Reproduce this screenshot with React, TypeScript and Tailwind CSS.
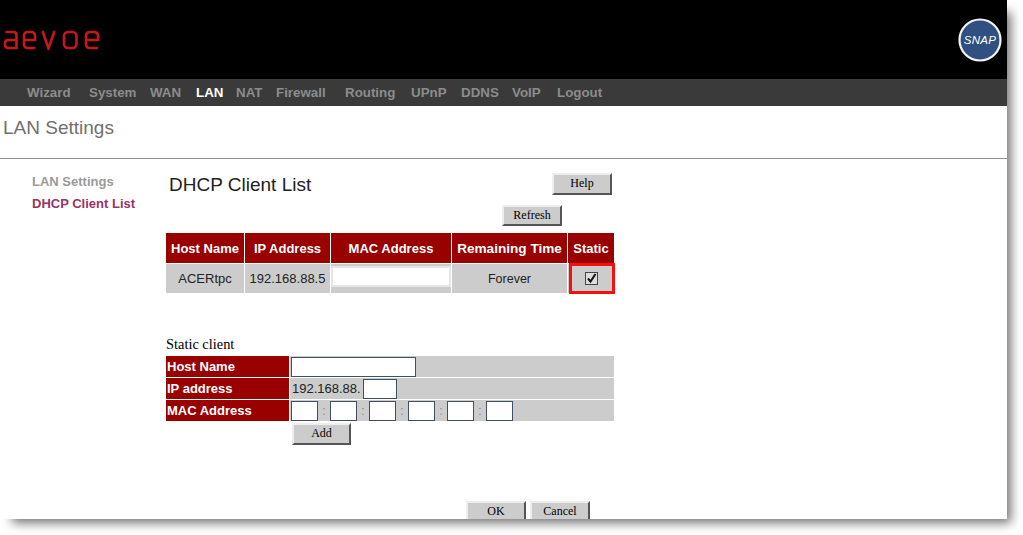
const NAV = [
  ["Wizard", "w-[62px]"],
  ["System", "w-[61px]"],
  ["WAN", "w-[46px]"],
  ["LAN", "w-[40px]"],
  ["NAT", "w-[40px]"],
  ["Firewall", "w-[69px]"],
  ["Routing", "w-[66px]"],
  ["UPnP", "w-[50px]"],
  ["DDNS", "w-[51px]"],
  ["VoIP", "w-[45px]"],
  ["Logout", "w-[60px]"],
] as const;

const sans = "font-['Liberation_Sans',Arial,sans-serif]";
const serif = "font-['Liberation_Serif','Times_New_Roman',serif]";

function Logo() {
  return (
    <svg width="100" height="20" viewBox="0 0 100 20" fill="none" stroke="#c8161d" strokeWidth="2.6">
      <path d="M5.500 2H13.500Q16.500 2 16.500 5V18H8.500Q5 18 5 14.500V13.500Q5 10 8.500 10H16.500" />
      <path d="M24 10H35V6Q35 2 31 2H28Q24 2 24 6V14Q24 18 28 18H35" />
      <path d="M42.500 1L48.500 18.500L54.500 1" />
      <rect x="64" y="2" width="12.500" height="16" rx="4" />
      <path d="M86 10H98V6Q98 2 94 2H90Q86 2 86 6V14Q86 18 90 18H98" />
    </svg>
  );
}

function SnapLogo() {
  return (
    <svg width="44" height="44" viewBox="0 0 44 44">
      <circle cx="22" cy="22" r="20.500" fill="#2f5080" stroke="#f4f4f4" strokeWidth="2.200" />
      <text x="22" y="26" textAnchor="middle" fill="#fff" fontSize="11.500" fontStyle="italic" fontWeight="400" letterSpacing="0.3" fontFamily="Liberation Sans, sans-serif">SNAP</text>
    </svg>
  );
}

function Btn({ children, className = "" }: { children: React.ReactNode; className?: string }) {
  return (
    <button className={`${serif} block bg-[#cccccc] text-[12px] leading-none pb-[2px] text-black border-2 border-t-[#eeeeee] border-l-[#eeeeee] border-r-[#555555] border-b-[#555555] ${className}`}>
      {children}
    </button>
  );
}

function Box({ w }: { w: string }) {
  return <span className={`block h-[20px] bg-white border border-[#3f5060] ${w}`} />;
}

function Sep() {
  return <span className="w-[12px] text-center text-[12px] text-[#888]">:</span>;
}

export default function App() {
  return (
    <div className="h-[535px] w-[1023px] bg-white overflow-hidden">
      <div className={`${sans} h-[519px] w-[1007px] bg-white shadow-[8px_8px_10px_-4px_rgba(0,0,0,0.55)]`}>
        <div className="h-[519px] overflow-hidden">
          <header className="h-[79px] bg-black flex items-center justify-between">
            <div className="pt-[1px]"><Logo /></div>
            <div className="mr-[5px] mt-[1px]"><SnapLogo /></div>
          </header>
          <nav className="flex h-[27px] pl-[27px] bg-[#3a3a3a] text-[13.33px] font-bold leading-[27px]">
            {NAV.map(([label, w]) => (
              <span key={label} className={`${w} ${label === "LAN" ? "text-white" : "text-[#8c8c8c]"}`}>
                {label}
              </span>
            ))}
          </nav>
          <div className="h-[53px] border-b border-[#909090] pl-[3px] pt-[10px] text-[19px] leading-[24px] text-[#707070]">LAN Settings</div>
          <div className="flex">
            <aside className="w-[166px] pl-[32px] pt-[12px] text-[13px] font-bold leading-[22px]">
              <div className="text-[#9a9a9a]">LAN Settings</div>
              <div className="text-[#993366]">DHCP Client List</div>
            </aside>
            <main className="w-[448px]">
              <div className="flex items-start justify-between h-[74px] pl-[3px]">
                <h1 className="mt-[14px] text-[19px] leading-[24px] text-[#222]">DHCP Client List</h1>
                <div className="flex flex-col items-end pt-[14px]">
                  <Btn className="w-[60px] h-[22px] mr-[2px]">Help</Btn>
                  <Btn className="w-[60px] h-[21px] mt-[10px] mr-[52px]">Refresh</Btn>
                </div>
              </div>
              <div className="grid grid-cols-[78px_85px_120px_115px_46px] gap-x-[1px] gap-y-[1px] h-[60px] grid-rows-[30px_29px] text-center text-[13px]">
                {["Host Name", "IP Address", "MAC Address", "Remaining Time", "Static"].map((h) => (
                  <div key={h} className={`bg-[#990000] text-white font-bold flex items-center justify-center ${h === "Remaining Time" ? "text-[13.6px] pt-[2px]" : "pt-[1px]"}`}>{h}</div>
                ))}
                <div className="bg-[#cccccc] text-[#222] flex items-center justify-center">ACERtpc</div>
                <div className="bg-[#cccccc] text-[#222] flex items-center justify-center">192.168.88.5</div>
                <div className="bg-[#cccccc] pt-[2px]"><div className="h-[21px] bg-white border-2 border-[#e6e6e6]" /></div>
                <div className="bg-[#cccccc] text-[#222] text-[12.5px] flex items-center justify-center pt-[1px]">Forever</div>
                <div className="relative bg-[#cccccc] flex items-center justify-center">
                  <span className="w-[13px] h-[13px] bg-[#dddddd] border border-[#444] flex items-center justify-center">
                    <svg width="11" height="11" viewBox="0 0 11 11" fill="none" stroke="#111" strokeWidth="2"><path d="M2 5.500L4.500 8.500L9.500 1" /></svg>
                  </span>
                  <span className="absolute -top-[1px] left-[1px] -right-[1px] -bottom-[1px] border-[3px] border-[#f51010]" />
                </div>
              </div>
              <div className={`${serif} mt-[42px] text-[14.400px] leading-[18px] text-black h-[21px]`}>Static client</div>
              <div className="grid grid-cols-[123px_324px] gap-x-[1px] gap-y-[1px] grid-rows-[21px_21px_21px] text-[13px]">
                <div className="bg-[#990000] text-white font-bold pl-[1px] leading-[21px]">Host Name</div>
                <div className="bg-[#cccccc] flex items-center pl-[1px]"><Box w="w-[125px]" /></div>
                <div className="bg-[#990000] text-white font-bold pl-[1px] leading-[21px]">IP address</div>
                <div className="bg-[#cccccc] flex items-center pl-[2px] text-[#222]">192.168.88.<span className="ml-[2px]"><Box w="w-[34px]" /></span></div>
                <div className="bg-[#990000] text-white font-bold pl-[1px] leading-[21px]">MAC Address</div>
                <div className="bg-[#cccccc] flex items-center pl-[1px]">
                  <Box w="w-[27px]" /><Sep /><Box w="w-[27px]" /><Sep /><Box w="w-[27px]" /><Sep /><Box w="w-[27px]" /><Sep /><Box w="w-[27px]" /><Sep /><Box w="w-[27px]" />
                </div>
              </div>
              <div className="pl-[126px] pt-[2px]"><Btn className="w-[59px] h-[22px]">Add</Btn></div>
              <div className="flex pl-[300px] pt-[56px]">
                <Btn className="w-[60px] h-[22px]">OK</Btn>
                <Btn className="w-[60px] h-[22px] ml-[4px]">Cancel</Btn>
              </div>
            </main>
          </div>
        </div>
      </div>
    </div>
  );
}
